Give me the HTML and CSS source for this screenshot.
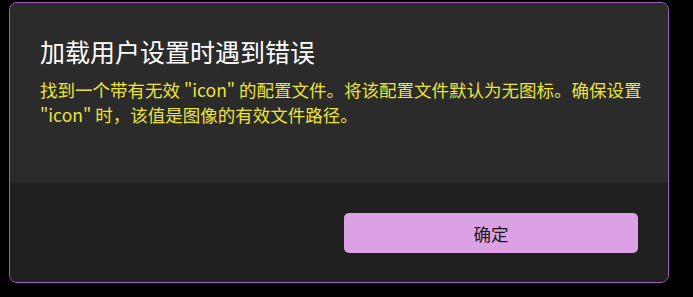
FILE: index.html
```html
<!DOCTYPE html>
<html lang="zh-CN">
<head>
<meta charset="utf-8">
<link rel="stylesheet" href="styles.css">
</head>
<body>
<div class="dialog">
  <div class="content">
    <h1 class="title">加载用户设置时遇到错误</h1>
    <p class="message">找到一个带有无效 "icon" 的配置文件。将该配置文件默认为无图标。确保设置 "icon" 时，该值是图像的有效文件路径。</p>
  </div>
  <div class="footer">
    <div class="spacer"></div>
    <button class="btn-primary">确定</button>
  </div>
</div>
</body>
</html>
```
FILE: styles.css
```css
html, body {
  margin: 0;
  padding: 0;
  background: #000000;
  width: 693px;
  height: 297px;
  overflow: hidden;
}
body {
  padding: 2px 0 0 9px;
  box-sizing: border-box;
  font-family: "Noto Sans CJK SC", "Noto Sans", sans-serif;
}
.dialog {
  width: 660px;
  height: 281px;
  box-sizing: border-box;
  border: 1px solid #a35fc0;
  border-radius: 8px;
  overflow: hidden;
  display: flex;
  flex-direction: column;
  background: #2b2b2b;
}
.content {
  flex: 1;
  padding: 31px 30px 0 30px;
  background: #2b2b2b;
}
.title {
  margin: 0 0 8px 0;
  font-size: 25px;
  line-height: 35px;
  font-weight: 400;
  color: #ffffff;
}
.message {
  margin: 0;
  font-size: 17.5px;
  line-height: 25px;
  color: #ece43a;
  width: 620px;
}
.footer {
  height: 100px;
  box-sizing: border-box;
  padding: 30px;
  background: #202020;
  border-top: 1px solid #262626;
  display: grid;
  grid-template-columns: 1fr 1fr;
  column-gap: 10px;
}
.btn-primary {
  height: 40px;
  border: none;
  border-radius: 5px;
  background: #dca0e4;
  color: #1a1a1a;
  font-family: "Noto Sans CJK SC", "Noto Sans", sans-serif;
  font-size: 17.5px;
  line-height: 25px;
  padding: 0;
}
```
